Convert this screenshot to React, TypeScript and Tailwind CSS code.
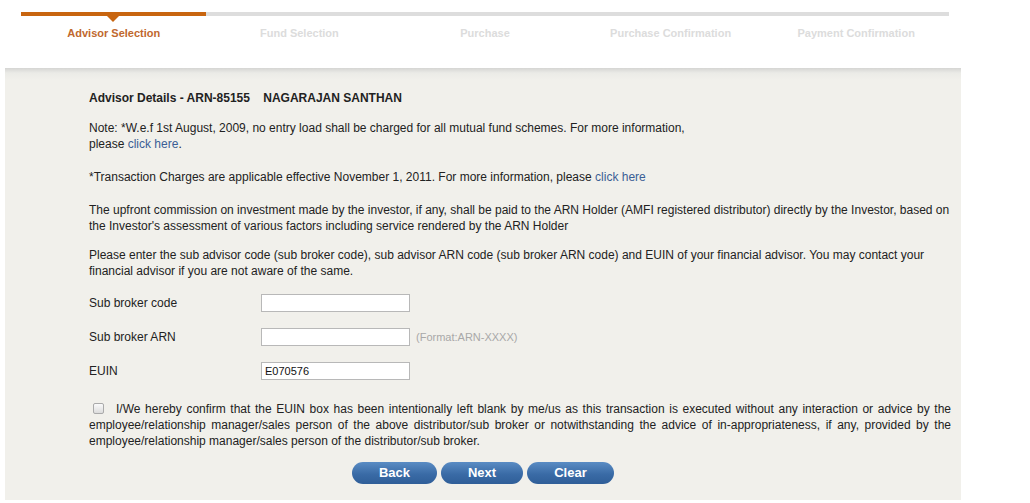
const steps = [
  "Advisor Selection",
  "Fund Selection",
  "Purchase",
  "Purchase Confirmation",
  "Payment Confirmation",
];

const Stepper = () => (
  <div className="ml-[21px] w-[928px] pt-[12px]">
    <div className="flex h-[4px]">
      <div className="relative w-[185px] bg-[#c8650f]">
        <div className="absolute left-[86px] top-[4px] h-0 w-0 border-x-[6px] border-t-[6px] border-x-transparent border-t-[#c8650f]" />
      </div>
      <div className="flex-1 bg-[#dddddd]" />
    </div>
    <div className="grid grid-cols-5 pt-[10px]">
      {steps.map((s, i) => (
        <div
          key={s}
          className={`text-center text-[11px] font-bold leading-[14px] ${i === 0 ? "text-[#c0682e]" : "text-[#dcdcdc]"}`}
        >
          {s}
        </div>
      ))}
    </div>
  </div>
);

const Field = ({ label, value, hint }: { label: string; value?: string; hint?: string }) => (
  <div className="flex h-[34px] items-center">
    <span className="w-[172px]">{label}</span>
    <input
      readOnly
      value={value ?? ""}
      className="h-[18px] w-[149px] border border-[#b8b8b8] bg-white px-[3px] text-[11px] text-[#111] outline-none"
    />
    {hint && <span className="ml-[6px] text-[11px] text-[#a8a8a8]">{hint}</span>}
  </div>
);

export default function App() {
  return (
    <div className="min-h-[503px] bg-white font-['Liberation_Sans',Arial,sans-serif] text-[12px] text-[#222]">
      <Stepper />
      <div className="ml-[5px] mt-[28px] w-[956px] bg-[#f1f0eb] bg-[linear-gradient(to_bottom,#d5d5d3_0px,#ebebe7_5px,#f1f0eb_12px)] pb-[16px] pl-[84px] pr-[10px] pt-[22px] leading-[16px]">
        <p className="font-bold">
          Advisor Details - ARN-85155&nbsp;&nbsp;&nbsp; NAGARAJAN SANTHAN
        </p>
        <p className="mt-[14px]">
          Note: *W.e.f 1st August, 2009, no entry load shall be charged for all mutual fund schemes. For more information,
          <br />
          please <a className="text-[#3b5e95]">click here</a>.
        </p>
        <p className="mt-[17px]">
          *Transaction Charges are applicable effective November 1, 2011. For more information, please{" "}
          <a className="text-[#3b5e95]">click here</a>
        </p>
        <p className="mt-[17px]">
          The upfront commission on investment made by the investor, if any, shall be paid to the ARN Holder (AMFI registered distributor) directly by the Investor, based on the Investor's assessment of various factors including service rendered by the ARN Holder
        </p>
        <p className="mt-[13px]">
          Please enter the sub advisor code (sub broker code), sub advisor ARN code (sub broker ARN code) and EUIN of your financial advisor. You may contact your financial advisor if you are not aware of the same.
        </p>
        <div className="mt-[7px]">
          <Field label="Sub broker code" />
          <Field label="Sub broker ARN" hint="(Format:ARN-XXXX)" />
          <Field label="EUIN" value="E070576" />
        </div>
        <p className="mt-[13px] text-justify">
          <span className="mr-[12px] ml-[4px] inline-block h-[11px] w-[11px] translate-y-[1px] rounded-[2px] border border-[#aaa] bg-[linear-gradient(to_bottom,#fafafa,#dcdcdc)]" />
          I/We hereby confirm that the EUIN box has been intentionally left blank by me/us as this transaction is executed without any interaction or advice by the employee/relationship manager/sales person of the above distributor/sub broker or notwithstanding the advice of in-appropriateness, if any, provided by the employee/relationship manager/sales person of the distributor/sub broker.
        </p>
        <div className="mt-[13px] flex justify-center gap-[4px] pr-[74px]">
          {["Back", "Next", "Clear"].map((b) => (
            <button
              key={b}
              className={`h-[22px] ${b === "Next" ? "w-[82px]" : b === "Back" ? "w-[85px]" : "w-[87px]"} rounded-full bg-[linear-gradient(to_bottom,#5a8cc4,#3a6ba6_55%,#2f5e98)] text-[13px] font-bold text-white`}
            >
              {b}
            </button>
          ))}
        </div>
      </div>
    </div>
  );
}
